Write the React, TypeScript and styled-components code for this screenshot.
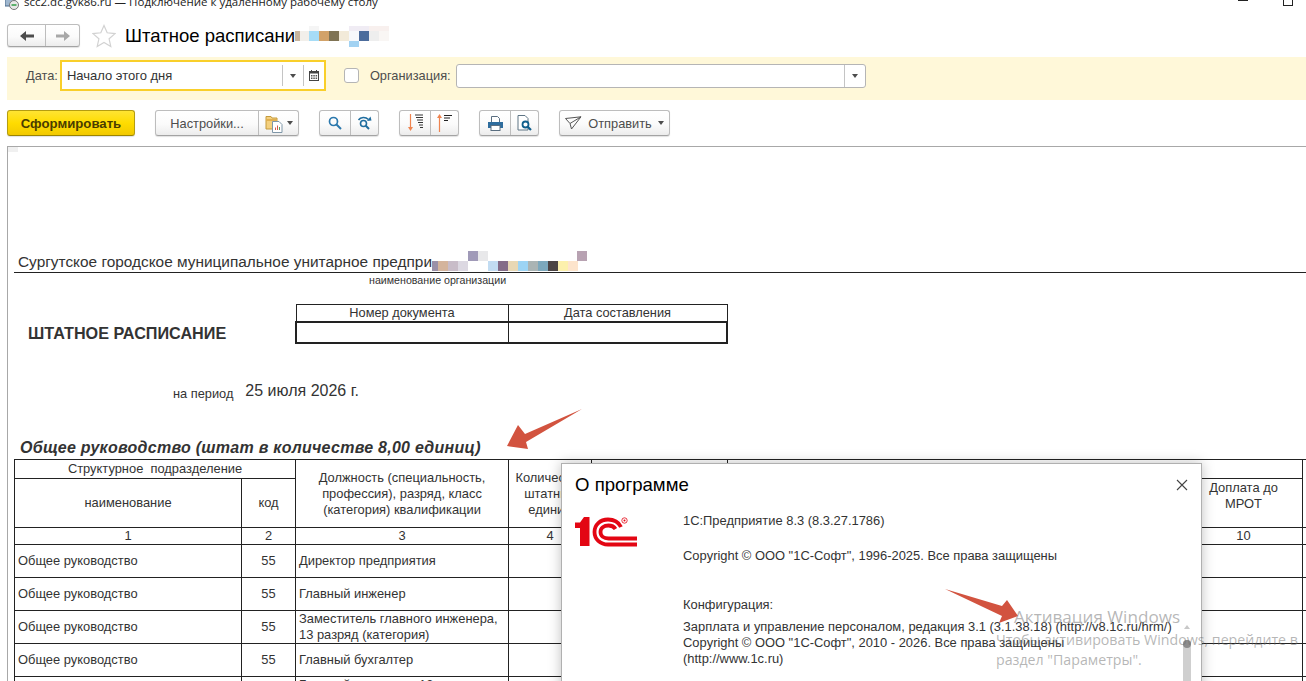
import React from "react";
import styled, { createGlobalStyle } from "styled-components";

const Global = createGlobalStyle`
  html, body { margin: 0; padding: 0; background: #fff; overflow: hidden; }
  * { box-sizing: border-box; }
`;

const FONT = `"Liberation Sans", Arial, sans-serif`;

const Page = styled.div`
  position: relative;
  width: 1306px;
  height: 681px;
  overflow: hidden;
  background: #fff;
  display: flex;
  flex-direction: column;
  font-family: ${FONT};
  font-size: 12px;
  color: #333;
`;

const TitleBar = styled.div`
  flex: none;
  height: 24px;
  display: flex;
  align-items: flex-start;
  overflow: hidden;
  padding-left: 5px;
`;
const RdpText = styled.span`
  font-family: "Open Sans", "Noto Sans", sans-serif;
  font-size: 11.5px;
  line-height: 4px;
  margin-left: 5px;
  color: #222;
  white-space: nowrap;
`;
const WinMin = styled.span`
  position: absolute;
  left: 1238px;
  top: 0;
  width: 10px;
  height: 1px;
  background: #222;
`;
const WinMax = styled.span`
  position: absolute;
  left: 1283px;
  top: -4px;
  width: 10px;
  height: 10px;
  border: 1px solid #222;
`;

const NavRow = styled.div`
  flex: none;
  height: 23px;
  margin-bottom: 10px;
  padding-left: 7px;
  display: flex;
  align-items: center;
`;
const Group = styled.div<{ $w?: number; $primary?: boolean }>`
  flex: none;
  display: inline-flex;
  height: 100%;
  width: ${(p) => (p.$w ? `${p.$w}px` : "auto")};
  border: 1px solid ${(p) => (p.$primary ? "#b59d10" : "#bdbdbd")};
  border-bottom-color: ${(p) => (p.$primary ? "#9c8500" : "#a3a3a3")};
  border-radius: 3px;
  background: ${(p) =>
    p.$primary
      ? "linear-gradient(#ffe433, #ffdc00 50%, #f2c900)"
      : "linear-gradient(#fff, #fbfbfb 55%, #ececec)"};
  box-shadow: 0 1px 1px rgba(0, 0, 0, 0.12);
  overflow: hidden;
`;
const Seg = styled.div<{ $w?: number; $grow?: boolean; $divider?: boolean; $gap?: number }>`
  display: flex;
  align-items: center;
  justify-content: center;
  gap: ${(p) => p.$gap ?? 0}px;
  width: ${(p) => (p.$w ? `${p.$w}px` : "auto")};
  flex: ${(p) => (p.$grow ? 1 : "none")};
  border-left: ${(p) => (p.$divider ? "1px solid #bdbdbd" : "none")};
`;
const StarWrap = styled.div`
  margin: 0 9px 0 12px;
  height: 23px;
  display: flex;
  align-items: center;
`;
const FormTitle = styled.div`
  font-size: 18.55px;
  line-height: 23px;
  color: #000;
  white-space: nowrap;
`;
const Mosaic = styled.svg`
  display: block;
  flex: none;
`;

const FilterBar = styled.div`
  flex: none;
  height: 43px;
  margin-left: 7px;
  background: #fff8d9;
  display: flex;
  align-items: center;
  padding: 0 0 6px 19px;
`;
const FieldLabel = styled.span`
  color: #4d4d4d;
  font-size: 12.8px;
  white-space: nowrap;
`;
const FocusField = styled.div`
  margin-left: 2px;
  width: 266px;
  height: 31px;
  border: 2px solid #f9cf2a;
  background: #fff;
  padding: 3px 0;
  display: flex;
  align-items: stretch;
`;
const FieldText = styled.div`
  flex: 1;
  display: flex;
  align-items: center;
  padding-left: 5px;
  font-size: 13px;
  color: #333;
`;
const FieldBtn = styled.div<{ $w: number }>`
  flex: none;
  width: ${(p) => p.$w}px;
  border-left: 1px solid #c4c4c4;
  display: flex;
  align-items: center;
  justify-content: center;
`;
const Check = styled.div`
  flex: none;
  width: 15px;
  height: 15px;
  margin: 0 11px 0 18px;
  background: #fff;
  border: 1px solid #b5b5b5;
  border-radius: 3px;
`;
const OrgInput = styled.div`
  margin: 1px 0 0 5px;
  width: 410px;
  height: 24px;
  background: #fff;
  border: 1px solid #b5b5b5;
  border-radius: 3px;
  display: flex;
  justify-content: flex-end;
`;
const Caret = styled.span`
  display: block;
  width: 0;
  height: 0;
  border-left: 3.5px solid transparent;
  border-right: 3.5px solid transparent;
  border-top: 4px solid #4d4d4d;
`;

const Toolbar = styled.div`
  flex: none;
  height: 26px;
  margin-top: 10px;
  padding-left: 7px;
  display: flex;
  gap: 20px;
`;
const BtnText = styled.span<{ $bold?: boolean }>`
  color: ${(p) => (p.$bold ? "#4a3c00" : "#4d4d4d")};
  font-size: ${(p) => (p.$bold ? 13.2 : 12.8)}px;
  font-weight: ${(p) => (p.$bold ? 700 : 400)};
  white-space: nowrap;
`;

const Report = styled.div`
  flex: 1;
  min-height: 0;
  margin: 10px 0 0 7px;
  border-top: 1px solid #a8a8a8;
  border-left: 1px solid #a8a8a8;
  overflow: hidden;
  padding: 104px 0 0 6px;
  position: relative;
`;
const CornerMark = styled.span`
  position: absolute;
  left: 0;
  top: 0;
  width: 10px;
  height: 5px;
  background: #f0f0f0;
`;
const OrgLine = styled.div`
  height: 22px;
  border-bottom: 1px solid #222;
  padding-left: 4px;
  display: flex;
  align-items: flex-end;
`;
const OrgName = styled.span`
  font-size: 15.4px;
  line-height: 19px;
  margin-bottom: 1px;
  color: #333;
  white-space: nowrap;
`;
const Hint = styled.div`
  margin: 1px 0 0 355px;
  font-size: 10.67px;
  line-height: 12px;
  height: 12px;
  color: #333;
`;
const DocHead = styled.div`
  margin-top: 18px;
  display: flex;
  align-items: flex-start;
`;
const DocTitle = styled.div`
  width: 281px;
  padding: 20px 0 0 14px;
  font-size: 16.2px;
  line-height: 18px;
  font-weight: 700;
  color: #333;
  white-space: nowrap;
`;
const DocTable = styled.table`
  border-collapse: collapse;
  table-layout: fixed;
  width: 431px;
`;
const DocTh = styled.th`
  height: 17px;
  padding: 0;
  font-weight: 400;
  font-size: 12.8px;
  color: #333;
  border: 1px solid #222;
  border-bottom: 2px solid #222;
`;
const DocTd = styled.td<{ $first?: boolean }>`
  height: 21px;
  padding: 0;
  border: 2px solid #222;
  border-left-width: ${(p) => (p.$first ? 2 : 1)}px;
  border-right-width: ${(p) => (p.$first ? 1 : 2)}px;
`;
const PeriodRow = styled.div`
  margin-top: 38px;
  padding-left: 159px;
  display: flex;
  align-items: flex-start;
  gap: 12px;
  height: 20px;
`;
const PeriodLabel = styled.span`
  margin-top: 3px;
  font-size: 12.8px;
  line-height: 18px;
  color: #333;
`;
const PeriodValue = styled.span`
  font-size: 16px;
  line-height: 18px;
  color: #333;
`;
const SectionTitle = styled.div`
  margin-top: 36px;
  padding-left: 6px;
  font-size: 16px;
  line-height: 19px;
  height: 19px;
  font-weight: 700;
  font-style: italic;
  letter-spacing: 0.27px;
  color: #333;
  white-space: nowrap;
`;
const Staff = styled.table`
  margin-top: 2px;
  border-collapse: collapse;
  table-layout: fixed;
  width: 1388px;
  th { padding-top: 1px; }
`;
const Cell = styled.td<{ $h?: number; $align?: string; $top?: boolean }>`
  height: ${(p) => (p.$h ? `${p.$h}px` : "auto")};
  padding: 0 3px;
  border: 1px solid #222;
  font-size: 12.9px;
  line-height: 16px;
  font-weight: 400;
  color: #333;
  text-align: ${(p) => p.$align ?? "center"};
  vertical-align: ${(p) => (p.$top ? "top" : "middle")};
  white-space: pre-wrap;
`;

const Modal = styled.div`
  position: absolute;
  left: 561px;
  top: 463px;
  width: 641px;
  height: 260px;
  background: #fff;
  border: 1px solid #b0b0b0;
  box-shadow: 0 0 12px rgba(0, 0, 0, 0.25);
  padding: 10px 13px;
`;
const ModalHead = styled.div`
  display: flex;
  align-items: center;
  justify-content: space-between;
  height: 22px;
`;
const ModalTitle = styled.div`
  font-size: 18.6px;
  color: #000;
`;
const ModalBody = styled.div`
  margin-top: 17px;
  display: flex;
`;
const LogoBox = styled.div`
  flex: none;
  width: 108px;
  padding-top: 5px;
  margin-top: -1px;
`;
const Info = styled.div`
  flex: 1;
  font-size: 12.92px;
  line-height: 16px;
  color: #333;
  white-space: nowrap;
`;
const InfoLine = styled.div<{ $mt?: number }>`
  margin-top: ${(p) => p.$mt ?? 0}px;
`;
const ScrollUp = styled.span`
  position: absolute;
  left: 622px;
  top: 161px;
  border-left: 3px solid transparent;
  border-right: 3px solid transparent;
  border-bottom: 4px solid #c8c8c8;
`;
const ScrollThumb = styled.span`
  position: absolute;
  left: 621px;
  top: 176px;
  width: 8px;
  height: 80px;
  background: #cfcfcf;
  border-radius: 4px;
  &::before {
    content: "";
    position: absolute;
    left: 0;
    top: 0;
    width: 8px;
    height: 8px;
    border-radius: 50%;
    background: #8c8c8c;
  }
`;
const Overlay = styled.svg`
  position: absolute;
  left: 0;
  top: 0;
  pointer-events: none;
`;
const Watermark = styled.div`
  position: absolute;
  left: 996px;
  top: 603px;
  font-family: "Open Sans", "Noto Sans", sans-serif;
  color: rgba(110, 110, 110, 0.5);
  white-space: nowrap;
`;
const WmTitle = styled.div`
  margin-left: 18px;
  font-size: 17.1px;
  line-height: 27px;
`;
const WmLine = styled.div`
  font-size: 14.2px;
  line-height: 20px;
`;

type Cellp = [number, number, number, string];
const MosaicPic = ({ w, h, size, cells }: { w: number; h: number; size: number; cells: Cellp[] }) => (
  <Mosaic width={w} height={h} viewBox={`0 0 ${w} ${h}`}>
    {cells.map(([x, y, cw, c], i) => (
      <rect key={i} x={x} y={y} width={cw} height={size} fill={c} />
    ))}
  </Mosaic>
);

const titleCells: Cellp[] = [
  [14, 2, 10, "#f5f5f5"], [54, 2, 20, "#f0ecf4"], [74, 2, 20, "#f8f0ee"],
  [0, 7, 5, "#c8b49c"], [5, 7, 10, "#f2efea"], [14, 7, 10, "#a6dcf6"], [24, 7, 10, "#d2a269"], [34, 7, 10, "#7f7354"],
  [44, 7, 10, "#f2ead9"], [54, 7, 10, "#f6f8fb"], [64, 7, 10, "#4c6c9c"], [74, 7, 10, "#eeeeee"], [84, 7, 10, "#f9f6f4"],
  [54, 17, 10, "#a2d2f2"],
];

const orgCells: Cellp[] = [
  [36, 0, 10, "#a09ab8"], [46, 0, 10, "#e8e8ea"], [145, 0, 10, "#b8a2b2"],
  [0, 10, 6, "#9a90a8"], [6, 10, 10, "#d4b49c"], [16, 10, 10, "#c8bcc8"], [26, 10, 10, "#dcd8e2"],
  [56, 10, 10, "#c2dcf2"], [66, 10, 10, "#846c88"], [76, 10, 10, "#e8d8b4"], [86, 10, 10, "#9cd4f4"],
  [96, 10, 10, "#aab4b4"], [106, 10, 10, "#7ca8bc"], [116, 10, 10, "#4c4444"], [126, 10, 10, "#fcf0ac"], [136, 10, 10, "#fde4cc"],
];

const ArrowBack = ({ c }: { c: string }) => (
  <svg width="16" height="12" viewBox="0 0 16 12"><path d="M1 6l6-5v3.500h8v3H7V11z" fill={c} /></svg>
);
const ArrowNext = ({ c }: { c: string }) => (
  <svg width="16" height="12" viewBox="0 0 16 12"><path d="M15 6L9 1v3.500H1v3h8V11z" fill={c} /></svg>
);
const Star = () => (
  <svg width="24" height="24" viewBox="0 0 24 24">
    <path d="M12 1.500l3.200 7.300 7.800.8-5.900 5.200 1.700 7.700L12 18.500l-6.800 4 1.700-7.700L1 9.600l7.800-.8z" fill="#fff" stroke="#d2d2d2" strokeWidth="1.200" />
  </svg>
);
const Calendar = () => (
  <svg width="10" height="11" viewBox="0 0 10 11">
    <path d="M2 0h1v2H2zM7 0h1v2H7z" fill="#444" />
    <rect x="0.500" y="1.500" width="9" height="9" fill="#fff" stroke="#444" />
    <rect x="0" y="1" width="10" height="2.500" fill="#444" />
    <path d="M2 5h1.500v1.500H2zM4.300 5h1.500v1.500H4.300zM6.600 5h1.500v1.500H6.600zM2 7.500h1.500V9H2zM4.300 7.500h1.500V9H4.300zM6.600 7.500h1.500V9H6.600z" fill="#555" />
  </svg>
);
const FolderDoc = () => (
  <svg width="18" height="19" viewBox="0 0 18 19">
    <path d="M1 2.500h5l1 1.500h5v11H1z" fill="#f4d07e" stroke="#c49a3c" />
    <rect x="1" y="5" width="11" height="2" fill="#e0b050" />
    <path d="M7.500 7.500h6.500l3 3v8H7.500z" fill="#fff" stroke="#7f97a8" />
    <path d="M10 16v-2.500h1V16zM12 16v-4.500h1V16z" fill="#d8584a" />
    <path d="M14 16v-3h1v3z" fill="#5a9e5a" />
  </svg>
);
const SearchIcon = () => (
  <svg width="14" height="14" viewBox="0 0 14 14" fill="none">
    <circle cx="5.500" cy="5.500" r="4" stroke="#2b78ad" strokeWidth="1.700" />
    <path d="M8.500 8.500l4.500 4.500" stroke="#2b78ad" strokeWidth="2" />
  </svg>
);
const SearchNextIcon = () => (
  <svg width="16" height="16" viewBox="0 0 16 16" fill="none">
    <circle cx="6.500" cy="8.500" r="3" stroke="#1f6d9f" strokeWidth="1.600" />
    <path d="M8.800 10.800L12 14" stroke="#1f6d9f" strokeWidth="2" />
    <path d="M1.500 5C3.500 1.800 8.500 1.500 11.500 4.500" stroke="#1f6d9f" strokeWidth="1.500" />
    <path d="M10 6l4.500-.5-1-4z" fill="#1f6d9f" />
  </svg>
);
const SortDown = () => (
  <svg width="15" height="18" viewBox="0 0 15 18">
    <path d="M2.500 0v14" stroke="#ee8450" strokeWidth="1.200" />
    <path d="M0 13h5l-2.500 4z" fill="#ee8450" />
    <path d="M7 1h8M8 3.500h7M9 6h6M10 8.500h5M11 11h4M12 13.500h3" stroke="#333" strokeWidth="1" />
  </svg>
);
const SortUp = () => (
  <svg width="15" height="18" viewBox="0 0 15 18">
    <path d="M2.500 18V3" stroke="#ee8450" strokeWidth="1.200" />
    <path d="M0 4h5L2.500 0z" fill="#ee8450" />
    <path d="M7 1.500h8M7 4h6M7 6.500h4" stroke="#222" strokeWidth="1.200" />
  </svg>
);
const Printer = () => (
  <svg width="15" height="15" viewBox="0 0 15 15">
    <path d="M3.500 6V.5h6l2 2V6" fill="#fff" stroke="#5a6e80" />
    <path d="M0 6h15v6H0z" fill="#2e6d9e" />
    <rect x="3" y="9.500" width="9" height="5" fill="#fff" stroke="#5a6e80" />
  </svg>
);
const Preview = () => (
  <svg width="15" height="16" viewBox="0 0 15 16">
    <path d="M1 .5h7l3 3V15H1z" fill="#fff" stroke="#5e7484" />
    <circle cx="8.500" cy="9.500" r="3" fill="#fff" stroke="#105f8c" strokeWidth="1.800" />
    <path d="M10.500 11.500l3.500 3.500" stroke="#105f8c" strokeWidth="2.200" />
  </svg>
);
const SendIcon = () => (
  <svg width="17" height="14" viewBox="0 0 17 14" fill="none" stroke="#555" strokeWidth="1">
    <path d="M.5 2.500L16 .8 6.500 13 5 7.500z" />
    <path d="M5 7.500L16 .8" />
  </svg>
);
const Close = () => (
  <svg width="12" height="12" viewBox="0 0 12 12">
    <path d="M1 1l10 10M11 1L1 11" stroke="#444" strokeWidth="1.100" fill="none" />
  </svg>
);
const Logo1C = () => (
  <svg width="63" height="30" viewBox="0 0 63 30">
    <path d="M5 5.500V11H0V5.500zM5 5.500L9 0h5.500v29H5z" fill="#e30613" />
    <g fill="none" stroke="#e30613" strokeWidth="3.800">
      <path d="M46 10C43.500 5 39 2.500 33 2.500 25 2.500 19.500 8 19.500 15S25 27.500 33 27.500H62" />
      <path d="M40.500 12C39 9.500 36.500 8.500 33.500 8.500 29 8.500 25.500 11 25.500 15S29 21.500 33.500 21.500H62" />
    </g>
    <circle cx="49.500" cy="3.500" r="2.700" fill="none" stroke="#e30613" strokeWidth="0.800" />
    <circle cx="49.500" cy="3.500" r="1" fill="#e30613" />
  </svg>
);
const RdpIcon = () => (
  <svg width="14" height="10" viewBox="0 0 14 10">
    <rect x="0" y="-3" width="10" height="9" fill="#9fb7cf" stroke="#4b6b8b" />
    <circle cx="9" cy="5" r="4.500" fill="#e8e8e8" stroke="#777" />
    <path d="M6.500 5h5" stroke="#2f9e44" strokeWidth="1.500" />
  </svg>
);

const rows = [
  "Директор предприятия",
  "Главный инженер",
  "Заместитель главного инженера, 13 разряд (категория)",
  "Главный бухгалтер",
  "Главный энергетик, 13 разряд (категория)",
];

export default function App() {
  return (
    <Page>
      <Global />
      <TitleBar>
        <RdpIcon />
        <RdpText>scc2.dc.gvk86.ru — Подключение к удаленному рабочему столу</RdpText>
      </TitleBar>
      <WinMin />
      <WinMax />

      <NavRow>
        <Group $w={73}>
          <Seg $w={37}><ArrowBack c="#4d4d4d" /></Seg>
          <Seg $grow $divider><ArrowNext c="#a8a8a8" /></Seg>
        </Group>
        <StarWrap><Star /></StarWrap>
        <FormTitle>Штатное расписани</FormTitle>
        <MosaicPic w={94} h={23} size={10} cells={titleCells} />
      </NavRow>

      <FilterBar>
        <FieldLabel>Дата:</FieldLabel>
        <FocusField>
          <FieldText>Начало этого дня</FieldText>
          <FieldBtn $w={21}><Caret /></FieldBtn>
          <FieldBtn $w={21}><Calendar /></FieldBtn>
        </FocusField>
        <Check />
        <FieldLabel>Организация:</FieldLabel>
        <OrgInput>
          <FieldBtn $w={21}><Caret /></FieldBtn>
        </OrgInput>
      </FilterBar>

      <Toolbar>
        <Group $w={128} $primary>
          <Seg $grow><BtnText $bold>Сформировать</BtnText></Seg>
        </Group>
        <Group $w={144}>
          <Seg $w={102}><BtnText>Настройки...</BtnText></Seg>
          <Seg $grow $divider $gap={4}><FolderDoc /><Caret /></Seg>
        </Group>
        <Group $w={60}>
          <Seg $w={30}><SearchIcon /></Seg>
          <Seg $grow $divider><SearchNextIcon /></Seg>
        </Group>
        <Group $w={60}>
          <Seg $w={30}><SortDown /></Seg>
          <Seg $grow $divider><SortUp /></Seg>
        </Group>
        <Group $w={60}>
          <Seg $w={30}><Printer /></Seg>
          <Seg $grow $divider><Preview /></Seg>
        </Group>
        <Group $w={111}>
          <Seg $grow $gap={6}><SendIcon /><BtnText>Отправить</BtnText><Caret /></Seg>
        </Group>
      </Toolbar>

      <Report>
        <CornerMark />
        <OrgLine>
          <OrgName>Сургутское городское муниципальное унитарное предпри</OrgName>
          <MosaicPic w={156} h={21} size={10} cells={orgCells} />
        </OrgLine>
        <Hint>наименование организации</Hint>
        <DocHead>
          <DocTitle>ШТАТНОЕ РАСПИСАНИЕ</DocTitle>
          <DocTable>
            <colgroup><col width={212} /><col width={219} /></colgroup>
            <thead>
              <tr><DocTh>Номер документа</DocTh><DocTh>Дата составления</DocTh></tr>
            </thead>
            <tbody>
              <tr><DocTd $first /><DocTd /></tr>
            </tbody>
          </DocTable>
        </DocHead>
        <PeriodRow>
          <PeriodLabel>на период</PeriodLabel>
          <PeriodValue>25 июля 2026 г.</PeriodValue>
        </PeriodRow>
        <SectionTitle>Общее руководство (штат в количестве 8,00 единиц)</SectionTitle>
        <Staff>
          <colgroup>
            <col width={227} /><col width={54} /><col width={213} /><col width={83} />
            <col width={136} /><col width={457} /><col width={118} /><col width={100} />
          </colgroup>
          <tbody>
            <tr>
              <Cell as="th" colSpan={2} $h={19}>{"Структурное  подразделение"}</Cell>
              <Cell as="th" rowSpan={2}>Должность (специальность, профессия), разряд, класс (категория) квалификации</Cell>
              <Cell as="th" rowSpan={2}>Количество штатных единиц</Cell>
              <Cell as="th" rowSpan={2} />
              <Cell as="th" colSpan={2} />
              <Cell as="th" rowSpan={2} />
            </tr>
            <tr>
              <Cell as="th" $h={49}>наименование</Cell>
              <Cell as="th">код</Cell>
              <Cell as="th" />
              <Cell as="th" $top>Доплата до<br />МРОТ</Cell>
            </tr>
            <tr>
              <Cell $h={17}>1</Cell><Cell>2</Cell><Cell>3</Cell><Cell>4</Cell>
              <Cell>5</Cell><Cell /><Cell>10</Cell><Cell />
            </tr>
            {rows.map((r) => (
              <tr key={r}>
                <Cell $h={33} $align="left">Общее руководство</Cell>
                <Cell>55</Cell>
                <Cell $align="left">{r}</Cell>
                <Cell /><Cell /><Cell /><Cell /><Cell />
              </tr>
            ))}
          </tbody>
        </Staff>
      </Report>

      <Modal>
        <ModalHead>
          <ModalTitle>О программе</ModalTitle>
          <Close />
        </ModalHead>
        <ModalBody>
          <LogoBox><Logo1C /></LogoBox>
          <Info>
            <InfoLine>1С:Предприятие 8.3 (8.3.27.1786)</InfoLine>
            <InfoLine $mt={19}>Copyright © ООО "1С-Софт", 1996-2025. Все права защищены</InfoLine>
            <InfoLine $mt={33}>Конфигурация:</InfoLine>
            <InfoLine $mt={6}>Зарплата и управление персоналом, редакция 3.1 (3.1.38.18) (http://v8.1c.ru/hrm/)</InfoLine>
            <InfoLine>Copyright © ООО "1С-Софт", 2010 - 2026. Все права защищены</InfoLine>
            <InfoLine>(http://www.1c.ru)</InfoLine>
          </Info>
        </ModalBody>
        <ScrollUp />
        <ScrollThumb />
      </Modal>

      <Overlay width="1306" height="681" viewBox="0 0 1306 681">
        <path d="M582 409L525 434 518 425 507 446 528 449 526 442z" fill="#d2533f" />
        <path d="M945 589L1002 606 1007 600 1018 616 999 623 1002 616z" fill="#d2533f" />
      </Overlay>
      <Watermark>
        <WmTitle>Активация Windows</WmTitle>
        <WmLine>Чтобы активировать Windows, перейдите в</WmLine>
        <WmLine>раздел "Параметры".</WmLine>
      </Watermark>
    </Page>
  );
}
